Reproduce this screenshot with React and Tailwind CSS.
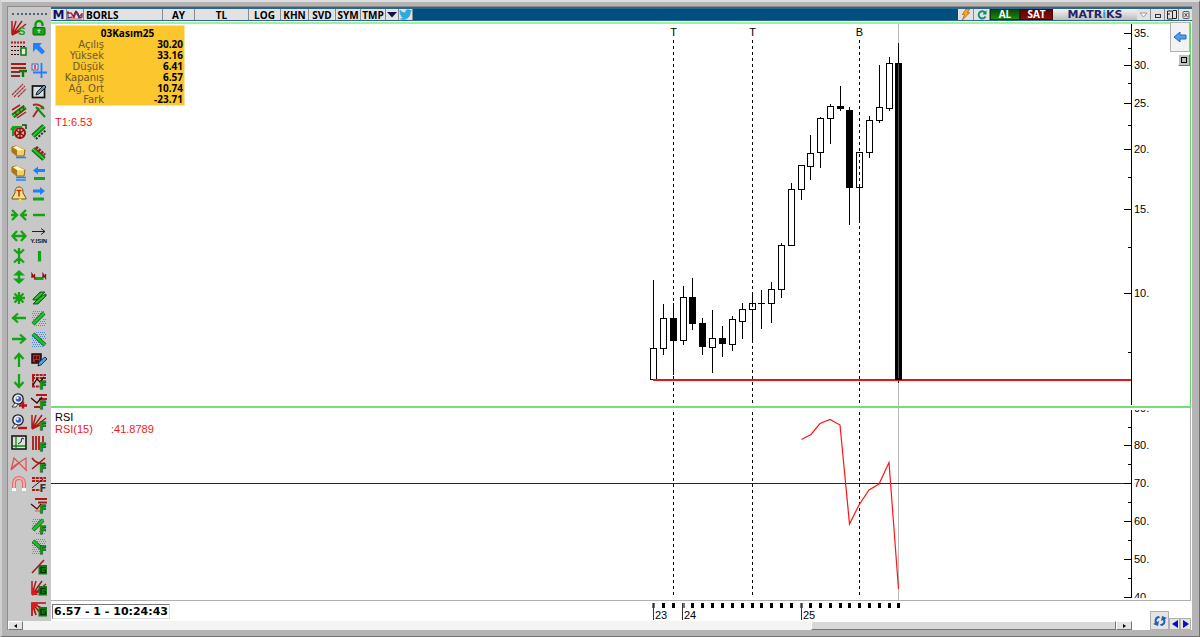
import React from "react";

const GREEN = "#12a412";
const DARK = "#0a5a0a";
const RED = "#b01818";
const BLUE = "#1f7fff";

/* ---------- icon pieces ---------- */

const Letter = ({ c }) => (
  <text x="8.5" y="15.5" fontSize="10" fontWeight="bold" fontFamily="DejaVu Sans, sans-serif" fill="#0c9c0c" stroke="#063c06" strokeWidth=".8" paintOrder="stroke">{c}</text>
);
const BoxG = () => (
  <g>
    <rect x="7.500" y="6" width="8.500" height="9.500" fill="#0f7a14" />
    <path d="M14.500 8.500h-4.500v5h4.500v-2.500h-2" fill="none" stroke="#052805" strokeWidth="1.200" />
  </g>
);
const Hatch = ({ d }) => (
  <path d={d} fill="none" stroke="#4a8ae6" strokeWidth="1" strokeDasharray="1 1" shapeRendering="crispEdges" />
);
const HATCH_UP = "M2 1.500h12M1 3.500h10M2 5.500h8M1 7.500h6M2 9.500h3M12 9.500h3M9 11.500h6M8 13.500h7M5 15.500h9";
const HATCH_DOWN = "M5 1.500h10M6 3.500h9M7 5.500h8M10 7.500h5M1 5.500h2M1 7.500h4M2 9.500h5M1 11.500h8M2 13.500h9M1 15.500h11";
const Slab = ({ d }) => (
  <g fill="none">
    <path d={d} stroke={DARK} strokeWidth="5" />
    <path d={d} stroke="#14a414" strokeWidth="3.200" />
    <path d={d} stroke="#4fd84f" strokeWidth="1" />
  </g>
);
const Bar = ({ d }) => (
  <g fill="none">
    <path d={d} stroke={DARK} strokeWidth="4" />
    <path d={d} stroke="#22bc32" strokeWidth="2.800" />
  </g>
);
const Arrows = ({ d }) => <path d={d} fill="none" stroke={GREEN} strokeWidth="2.300" />;
const Gold = ({ two }) => (
  <g>
    <path d="M1 2l4-1 9 4-1 6H6L1 7z" fill="#f6cf5f" stroke="#8a6414" />
    <path d="M1 2l5 3v6L1 7z" fill="#a87818" />
    <path d="M2 2l4-1 8 4-7 .5z" fill="#fff3c0" />
    <path d="M5 12.500h10" stroke={BLUE} strokeWidth="1.600" />
    {two && <path d="M5 15h10" stroke={BLUE} strokeWidth="1.400" />}
  </g>
);
const Lens = ({ plus }) => (
  <g>
    <circle cx="7" cy="6" r="5.200" fill="#e4ecff" stroke="#1b1b1b" strokeWidth="1.300" />
    <circle cx="7.500" cy="6" r="2.800" fill="#3a5ac0" />
    <circle cx="6.500" cy="5" r="1.200" fill="#fff" />
    <path d="M4 10l-3 4h4l2-3z" fill="#eee" stroke="#222" strokeWidth=".8" />
    <path d={plus ? "M8 12.500h8M12 8.500v7" : "M7 14h9"} stroke="#c01010" strokeWidth="2.400" />
  </g>
);
const Fan = () => <path d="M1 1v13M1 15L5 1M1 15L11 1M1 15L15 4M1 15L9 11" stroke={RED} strokeWidth="1.500" fill="none" />;

const LEFT = [
  ["Fan", <g><Fan /><text x="7" y="15" fontSize="11" fontWeight="bold" fontFamily="Liberation Sans, sans-serif" fill={GREEN}>S</text></g>],
  ["Levels", <g><path d="M0 1.500h15" stroke={RED} strokeWidth="2" strokeDasharray="2 1" /><path d="M0 5.500h15M0 9.500h10M0 13.500h9" stroke="#400" strokeDasharray="2 1" /><rect x="10" y="7" width="5" height="7" fill="#dff0df" stroke="#0a7a0a" strokeWidth="1.500" /></g>],
  ["Level text", <g><path d="M0 2h15M0 6h15" stroke={RED} strokeWidth="2" /><path d="M0 10h9M0 14h9" stroke="#600" strokeWidth="1.300" /><path d="M8 9h8M12 9v6" stroke="#0a7a0a" strokeWidth="2.400" /></g>],
  ["Parallel lines", <path d="M1 12L12 1M3 14L14 3M7 14L15 6" stroke="#9b3030" strokeWidth="1.200" strokeDasharray="3 .5" />],
  ["Channel", <g><Slab d="M2 13L14 4" /><path d="M1 7L9 2M6 15L15 9M4 9l2 4M8 6l2 4M12 3l1 4" stroke={RED} strokeWidth="1.500" /></g>],
  ["Target", <g><circle cx="9" cy="9" r="5" fill="#f3b0a0" stroke="#a01010" strokeWidth="2" /><path d="M5 6l8 6M13 6l-8 6M9 4v11" stroke="#7a0c0c" strokeWidth="1.300" /><path d="M2 12V4M0 6l2-3 3 3M3 3h8" stroke={GREEN} strokeWidth="2" fill="none" /><path d="M11 1h4v4" stroke="#0a4a0a" strokeWidth="1.500" fill="none" /></g>],
  ["Gold line", <Gold />],
  ["Gold lines", <Gold two />],
  ["Alarm", <g><path d="M8 1c-4 0-4 4-4 6l-3 5v1h14v-1l-3-5c0-2 0-6-4-6z" fill="#f4e08a" stroke="#6b5410" /><circle cx="9" cy="14" r="1.500" fill="#fbe02c" /><path d="M5.500 4.500h5M8 4.500v6" stroke="#d02a10" strokeWidth="1.500" /></g>],
  ["Compress horizontally", <Arrows d="M0 8h6M16 8h-6M1 3l5 5-5 5M15 3l-5 5 5 5" />],
  ["Expand horizontally", <Arrows d="M2 8h12M6 3L1.500 8 6 13M10 3l4.500 5-4.500 5" />],
  ["Compress vertically", <Arrows d="M8 0v16M3 1.500l5 4.500 5-4.500M3 14.500l5-4.500 5 4.500" />],
  ["Expand vertically", <g><path d="M8 1l6 5.500H2zM8 15l6-5.500H2z" fill={GREEN} /><path d="M8 4v8" stroke={GREEN} strokeWidth="2.400" /></g>],
  ["Fit", <Arrows d="M8 2v12M2 8h12M3.500 3.500l9 9M12.500 3.500l-9 9" />],
  ["Left", <Arrows d="M2 8h13M7 3.500L2 8l5 4.500" />],
  ["Right", <Arrows d="M1 8h13M9 3.500L14 8l-5 4.500" />],
  ["Up", <Arrows d="M8 15V2.500M3.500 7L8 2l4.500 5" />],
  ["Down", <Arrows d="M8 1v12.500M3.500 9L8 14l4.500-5" />],
  ["Zoom in", <Lens plus />],
  ["Zoom out", <Lens />],
  ["Chart box", <g><rect x="1" y="1" width="14" height="13" fill="#d8e4d8" stroke="#181818" strokeWidth="1.600" /><path d="M5 2v11M2 11h12" stroke="#0c8c0c" strokeWidth="1.300" /><path d="M7 9l3-2 1-4 2 1" stroke="#222" fill="none" /></g>],
  ["Pattern", <path d="M0 14L3 2l12 12V2L3 10l-3 4 8-7 8 8" fill="none" stroke="#e05050" strokeWidth="1.200" />],
  ["Magnet", <g fill="none"><path d="M3 12V7a5 5 0 0110 0v5" stroke="#e86a6a" strokeWidth="4" /><path d="M3 12V7a5 5 0 0110 0v5" stroke="#f2b4b4" strokeWidth="1.800" /><path d="M1 13.500h4M11 13.500h4" stroke="#fff" strokeWidth="3" /></g>],
];

const RIGHT = [
  ["Unlock", <g><path d="M4.500 8V4.500a3.500 3.500 0 017 0V6" fill="none" stroke="#149a14" strokeWidth="2.400" /><rect x="2" y="7.500" width="12" height="7.500" rx="1" fill="#18a018" stroke="#0a6a0a" /><path d="M8 13v-3M6.500 11L8 9.500 9.500 11" stroke="#d8ffd8" fill="none" /></g>],
  ["Pointer", <path d="M2 2h9L8.500 4.500 14 10.500 11 13.500 5 7.800 2 11z" fill={BLUE} />],
  ["Crosshair", <g><path d="M10.500 1v15M2 10.500h14" stroke={BLUE} strokeWidth="1.800" /><rect x="1" y="2" width="6" height="6" fill="#e9d8e0" stroke="#3a68c8" /><path d="M4 3v4" stroke="#c02020" strokeWidth="1.400" /></g>],
  ["Edit", <g><rect x="1.500" y="3" width="12" height="11.500" fill="#dcdcdc" stroke="#101010" strokeWidth="1.700" /><path d="M5 12l1-3 7-7 2 2-7 7z" fill="#4a9ad8" stroke="#111" strokeWidth=".9" /></g>],
  ["Tools", <g fill="none" strokeWidth="2"><path d="M2 2q6-2 11 4M8 5L2 14" stroke="#b02828" /><path d="M5 4l9 10M12 3l-2 3" stroke="#158a15" /></g>],
  ["Channel up", <g><Slab d="M2 12L13 2" /><path d="M5 15L15 6" stroke="#103810" strokeWidth="2" strokeDasharray="2 1.500" /></g>],
  ["Channel down", <g><Slab d="M2 4l11 10" /><path d="M5 2l9 8" stroke="#a01818" strokeWidth="3" strokeDasharray="2.500 1" /></g>],
  ["Line left", <g><path d="M2 5.500L7 1.500V4h7v3H7v2.500z" fill={BLUE} /><path d="M3 13.500h11" stroke={GREEN} strokeWidth="3" /></g>],
  ["Line right", <g><path d="M14 5L9 1v2.500H2v3h7V9z" fill={BLUE} /><path d="M2 13h11" stroke={GREEN} strokeWidth="3" /></g>],
  ["Horizontal line", <path d="M2 8h12" stroke={GREEN} strokeWidth="2.500" />],
  ["Yield", <g><path d="M1 3.500h13M10 .5l4 3-4 3" fill="none" stroke="#222" /><text x="-.5" y="15" fontSize="6" fontWeight="bold" fontFamily="Liberation Sans, sans-serif" fill="#111">Y.ISIN</text></g>],
  ["Vertical line", <path d="M8.500 3v10.500" stroke={GREEN} strokeWidth="3.200" />],
  ["Range", <g fill="none"><path d="M3.500 9.500h9" stroke={GREEN} strokeWidth="3" /><path d="M1 9V5l2.500 4V5M12 9V5l2.500 4V5" stroke="#8a1010" strokeWidth="1.300" /></g>],
  ["Band", <g><path d="M2 9L9 2h5L6 10H2zM2 14h5l8-8V4L9 7z" fill="#18a418" stroke={DARK} strokeWidth=".9" /><path d="M4 9L11 3M5 13L13 6" stroke="#4fd84f" strokeWidth=".9" /></g>],
  ["Area up", <g><Hatch d={HATCH_UP} /><Bar d="M2 14L13 3" /></g>],
  ["Area down", <g><Hatch d={HATCH_DOWN} /><Bar d="M2 3l12 11" /></g>],
  ["Annotate", <g><path d="M1 2h9v9H1z" fill="#b82828" stroke="#220606" strokeWidth="1.500" /><path d="M4 4v3M7 4v3M4 9h4" stroke="#200" strokeWidth="1.400" /><path d="M7 14l1-4 6-5 2 2-6 6z" fill="#49a3e8" stroke="#102030" strokeWidth=".9" /></g>],
  ["Fibonacci grid", <g><path d="M1 2h14M1 5h14M1 13.500h8M2 2v12" stroke={RED} strokeWidth="2" strokeDasharray="3 .8" /><path d="M2 12l4-6 3 3 4-5" stroke="#300" fill="none" strokeWidth="1.300" /><Letter c="F" /></g>],
  ["Fibonacci levels", <g><path d="M5 2h11M8 6h8M3 14h6" stroke={RED} strokeWidth="1.800" /><path d="M0 5l6 5 5-6" stroke="#400" fill="none" strokeWidth="1.300" /><Letter c="F" /></g>],
  ["Fibonacci fan", <g><Fan /><Letter c="F" /></g>],
  ["Fibonacci time", <g><path d="M2 1v14M5 1v14M8 1v14M12 1v6" stroke={RED} strokeWidth="1.800" /><Letter c="F" /></g>],
  ["Fibonacci arcs", <g><path d="M1 13L14 2M1 2q5 7 13 5" fill="none" stroke="#a01818" strokeWidth="1.600" /><Letter c="F" /></g>],
  ["Fibonacci zones", <g><path d="M1 2h14M1 5h14M1 14h8" stroke={RED} strokeWidth="1.800" strokeDasharray="3 .8" /><path d="M1 12L12 3" stroke="#222" /><text x="8.500" y="15.500" fontSize="10" fontWeight="bold" fontFamily="DejaVu Sans, sans-serif" fill="#333">F</text></g>],
  ["Fibonacci extension", <g><path d="M4 2h12M7 5.500h9" stroke={RED} strokeWidth="1.800" /><path d="M4 14h5" stroke="#f08080" strokeWidth="2" /><path d="M0 7l6 5 4-5" stroke="#400" fill="none" strokeWidth="1.200" /><Letter c="F" /></g>],
  ["Fibonacci area up", <g><Hatch d={HATCH_UP} /><Bar d="M2 12L12 2" /><Letter c="F" /></g>],
  ["Fibonacci area down", <g><Hatch d={HATCH_DOWN} /><Bar d="M2 3l9 8" /><Letter c="F" /></g>],
  ["Gann line", <g><path d="M1 14L13 1" stroke="#a01818" strokeWidth="1.500" /><BoxG /></g>],
  ["Gann fan", <g><Fan /><path d="M1 8v7h6z" fill="#e01818" /><BoxG /></g>],
  ["Gann fan down", <g><path d="M1 15V2h14M1 2l4 12M1 2l9 11M1 2l13 7" stroke="#b01010" strokeWidth="1.700" fill="none" /><path d="M1 2h7L1 9z" fill="#e01818" /><BoxG /></g>],
];

const Icon = ({ children }) => (
  <svg viewBox="0 0 16 16" className="block size-4 overflow-visible">{children}</svg>
);

const IconColumn = ({ items }) => (
  <div className="grid w-5 auto-rows-fr" style={{ height: `${(items.length / RIGHT.length) * 100}%` }}>
    {items.map(([name, art]) => (
      <button key={name} aria-label={name} className="grid min-h-0 place-items-center">
        <Icon>{art}</Icon>
      </button>
    ))}
  </div>
);

/* ---------- chart data: x, high, low, top, bottom, filled ---------- */

const CANDLES = [
  [653, 280, 379, 348, 379], [663, 304, 355, 318, 348], [673, 303, 375, 318, 340, 1],
  [683, 286, 345, 297, 340], [692, 278, 330, 297, 323, 1], [702, 318, 355, 323, 346, 1],
  [712, 310, 373, 338, 347], [722, 326, 357, 338, 343, 1], [732, 316, 351, 319, 344],
  [742, 303, 339, 309, 321], [752, 293, 341, 303, 309], [761, 290, 329, 303, 303],
  [771, 282, 323, 289, 303], [781, 243, 298, 245, 289], [791, 183, 246, 189, 245],
  [801, 165, 200, 165, 189], [810, 135, 180, 153, 166], [820, 117, 168, 118, 152],
  [830, 104, 144, 106, 118], [840, 86, 111, 106, 108, 1], [849, 107, 225, 110, 187, 1],
  [859, 152, 223, 152, 187], [869, 116, 158, 120, 152], [879, 65, 123, 107, 120],
  [889, 57, 111, 63, 108], [898, 43, 383, 63, 379, 1],
];
const MARKERS = [["T", 673], ["T", 752], ["B", 859]];
const PRICE = [["35.", 33], ["30.", 65], ["25.", 103], ["20.", 149], ["15.", 209], ["10.", 293]];
const PRICE_MINOR = [48, 83, 125, 177, 247, 352];
const RSI = [["90.", 408], ["80.", 445], ["70.", 483], ["60.", 521], ["50.", 559], ["40.", 597]];
const RSI_MINOR = [427, 464, 502, 540, 578];
const YEARS = [["23", 653], ["24", 682], ["25", 801]];

const left = (x) => ({ left: `${((x - 51) / 1081) * 100}%` });

const Plot = ({ y, h, children }) => (
  <svg viewBox={`51 ${y} 1081 ${h}`} preserveAspectRatio="none" className="absolute inset-0 h-full w-full">{children}</svg>
);

const Ticks = ({ major, minor, from, to }) => (
  <g stroke="#000" shapeRendering="crispEdges">
    <path d={`M1131.5 ${from}V${to}`} />
    {major.map(([t, y]) => <path key={t} d={`M1124 ${y + 0.5}h7`} />)}
    {minor.map((y) => <path key={y} d={`M1128 ${y + 0.5}h3`} />)}
  </g>
);

const Scale = ({ values, y, h }) => (
  <div className="relative my-0.5 w-[58px] shrink-0 overflow-hidden">
    {values.map(([t, v]) => (
      <span key={t} className="absolute left-0.5 -translate-y-1/2 leading-3" style={{ top: `${((v - y) / h) * 100}%` }}>{t}</span>
    ))}
  </div>
);

const Dashes = ({ from, to }) => (
  <g stroke="#000" strokeDasharray="3 3" shapeRendering="crispEdges">
    {MARKERS.map(([, x]) => <path key={x} d={`M${x + 0.5} ${from}V${to}`} />)}
  </g>
);

/* ---------- header ---------- */

const TAB = "flex shrink-0 items-center justify-center border-r border-[#8a8a8a] bg-[#e2e2e2] leading-3 ";

const Header = () => (
  <header className="flex h-3.5 shrink-0 border-t-2 border-b border-[#2a678c] bg-[#00507f] font-['Open_Sans',sans-serif] text-[10px] font-bold text-black">
    <span className={TAB + "w-4 font-['DejaVu_Sans',sans-serif] text-xs text-[#10106a]"}>M</span>
    <button aria-label="Chart type" className={TAB + "w-[17px]"}>
      <svg viewBox="0 0 16 10" className="h-2.5 w-4">
        <path d="M0 3h4l3 4 2-5 3 5 3-3" fill="none" stroke="#d02020" strokeWidth="1.700" />
        <path d="M1 1v7l4-1M6 8q2-8 4-6t2 6l3-1V3" fill="none" stroke="#25308a" strokeWidth="1.100" />
        <path d="M0 9h15" stroke="#d05050" />
      </svg>
    </button>
    <input aria-label="Symbol" defaultValue="BORLS" className="w-[79px] border-r border-[#8a8a8a] bg-[#e2e2e2] px-0.5 leading-3 outline-none" />
    <button className={TAB + "w-8"}>AY</button>
    <button className={TAB + "w-[54px]"}>TL</button>
    <button className={TAB + "w-8"}>LOG</button>
    <button className={TAB + "w-7"}>KHN</button>
    <button className={TAB + "w-[27px]"}>SVD</button>
    <button className={TAB + "w-[25px]"}>SYM</button>
    <button className={TAB + "w-[25px]"}>TMP</button>
    <button aria-label="More" className={TAB + "w-[13px]"}>
      <svg viewBox="0 0 10 6" className="h-1.5 w-2.5"><path d="M0 0h10L5 5.500z" fill="#10104a" /></svg>
    </button>
    <button aria-label="Twitter" className={TAB + "w-3.5"}>
      <svg viewBox="0 0 24 20" className="h-[11px] w-[13px]"><path d="M23.950 2.600a10 10 0 01-2.800.8 5 5 0 002.200-2.700c-1 .6-2 1-3.100 1.200a4.900 4.900 0 00-8.400 4.500A14 14 0 011.700 1.200a4.900 4.900 0 001.500 6.600c-.8 0-1.600-.2-2.200-.6v.1a5 5 0 004 4.800 5 5 0 01-2.200.1 4.900 4.900 0 004.600 3.400A9.900 9.900 0 010 17.600 14 14 0 007.500 19.800c9 0 14-7.500 14-14v-.6a10 10 0 002.450-2.600z" fill="#2fa9e0" /></svg>
    </button>
    <div className="flex-1" />
    <button aria-label="Quick order" className={TAB + "w-4"}>
      <svg viewBox="0 0 10 12" className="h-[11px] w-2.5"><path d="M5 0h4L6.500 4H9L1 12l2.500-6H1z" fill="#ffa51e" stroke="#b05a10" strokeWidth=".8" /></svg>
    </button>
    <button aria-label="Refresh" className={TAB + "w-4"}>
      <svg viewBox="0 0 10 10" className="size-2.5"><path d="M8 2.500A3.600 3.600 0 108.500 6.500" fill="none" stroke="#158a70" strokeWidth="1.900" /><path d="M9.500 0v4.500H5.500z" fill="#158a70" /></svg>
    </button>
    <button className="w-[30px] shrink-0 border border-[#0a3a0a] bg-gradient-to-b from-[#0a4a0a] to-[#1d8a0c] leading-[9px] text-white">AL</button>
    <button className="w-[33px] shrink-0 border border-[#4a0606] bg-gradient-to-b from-[#5a0606] to-[#8a0c0c] leading-[9px] text-white">SAT</button>
    <div className="flex w-[84px] shrink-0 items-center justify-center bg-gradient-to-b from-[#f4f4f4] to-[#bcbcbc] font-['DejaVu_Sans',sans-serif] text-[11px] leading-3 text-[#24246a]">
      MATR<span className="text-[#20a0d8]">i</span>KS
    </div>
    <button aria-label="Menu" className={TAB + "w-3.5"}><svg viewBox="0 0 9 6" className="h-1.5 w-[9px]"><path d="M1 1h7L4.500 5z" fill="#fff" stroke="#999" /></svg></button>
    <button aria-label="Minimize" className={TAB + "w-3.5"}><span className="mt-0.5 h-1 w-1.5 border border-[#333]" /></button>
    <button aria-label="Restore" className={TAB + "w-3.5"}><svg viewBox="0 0 10 10" className="size-2.5"><path d="M.5 1h5v8h-5zM6 .5h3.500v8H6M2 3v2" fill="none" stroke="#222" /></svg></button>
    <button aria-label="Close" className="grid w-[13px] shrink-0 place-items-center bg-[#e2e2e2]"><svg viewBox="0 0 8 8" className="size-2"><rect x="1" y=".5" width="6" height="7" rx="1" fill="none" stroke="#555" /><path d="M2.500 2l3 4M5.500 2l-3 4" stroke="#555" /></svg></button>
  </header>
);

const QUOTE = [["Açılış", "30.20"], ["Yüksek", "33.16"], ["Düşük", "6.41"], ["Kapanış", "6.57"], ["Ağ. Ort", "10.74"], ["Fark", "-23.71"]];

const QuoteBox = () => (
  <div className="w-[130px] border border-[#fbe3a0] bg-[#fcc62d] pt-px pr-px">
    <table className="w-full text-[10px] leading-[11px]">
      <caption className="pl-4 text-center font-['Open_Sans',sans-serif] leading-3 font-bold">03Kasım25</caption>
      <tbody>
        {QUOTE.map(([k, v]) => (
          <tr key={k}>
            <th scope="row" className="w-12 p-0 text-right font-['DejaVu_Sans',sans-serif] font-normal whitespace-nowrap text-[#6b5a28]">{k}</th>
            <td className="p-0 text-right font-['Open_Sans',sans-serif] font-bold">{v}</td>
          </tr>
        ))}
      </tbody>
    </table>
  </div>
);

const RAISED = "border border-t-white border-l-white border-r-[#777] border-b-[#777] ";

export default function App() {
  return (
    <div className="flex h-screen flex-col border-t-2 border-r border-b border-l-2 border-t-[#dedede] border-r-[#707070] border-b-[#707070] border-l-[#cfcfcf] bg-[#b4b4b4] pt-1 pr-[7px] pb-1.5 pl-[5px] font-['Liberation_Sans',sans-serif] text-[11px] text-black">
      <div className="flex min-h-0 flex-1 flex-col border-t border-l border-[#8c8c8c] bg-white">
        <div className="flex min-h-0 flex-1">
          <nav aria-label="Drawing tools" className="flex w-[43px] shrink-0 flex-col bg-[#c8c8c8] pt-1.5 pb-0.5">
            <div className="mx-1 mb-[3px] h-0.5 shrink-0 border-t-2 border-dotted border-[#4a6678]" />
            <div className="flex min-h-0 flex-1 pl-px">
              <IconColumn items={LEFT} />
              <IconColumn items={RIGHT} />
            </div>
          </nav>

          <main className="flex min-w-0 flex-1 flex-col">
            <Header />
            <section aria-label="Price" className="relative mt-px mr-px flex min-h-0 flex-[382] border-t-2 border-r border-b-2 border-t-[#9df09d] border-r-[#5fd85f] border-b-[#74e074]">
              <div className="relative min-w-0 flex-1">
                <Plot y={24} h={382}>
                  <path d="M898.5 24V406" stroke="#bdbdbd" shapeRendering="crispEdges" />
                  {CANDLES.map(([x, hi, lo, top, bottom, filled]) => (
                    <g key={x} shapeRendering="crispEdges" stroke="#000">
                      <path d={`M${x + 0.5} ${hi}V${lo}`} />
                      {top === bottom
                        ? <path d={`M${x - 3} ${top + 0.5}h7`} />
                        : <rect x={x - 2.5} y={top + 0.5} width="6" height={bottom - top} fill={filled ? "#000" : "#fff"} />}
                    </g>
                  ))}
                  <path d="M898.5 64V379" stroke="#8a8a8a" strokeWidth=".6" />
                  <Dashes from={40} to={406} />
                  <path d="M653 380H1132" stroke="#e01818" strokeWidth="2" shapeRendering="crispEdges" />
                  <path d="M895 378h7v2h-7z" />
                  <Ticks major={PRICE} minor={PRICE_MINOR} from={24} to={405} />
                </Plot>
                {MARKERS.map(([t, x]) => (
                  <span key={x} className="absolute top-0.5 -translate-x-1/2 leading-3" style={left(x + 0.5)}>{t}</span>
                ))}
                <div className="absolute top-px left-1 flex flex-col gap-2.5">
                  <QuoteBox />
                  <span className="leading-3 text-[#f01818]">T1:6.53</span>
                </div>
              </div>
              <Scale values={PRICE} y={26} h={378} />
              <div className="absolute -top-0.5 right-0 flex flex-col items-end gap-0.5">
                <button aria-label="Collapse" className="grid h-[30px] w-5 place-items-center border border-[#b0b0b0] bg-[#f2f2f2]">
                  <svg viewBox="0 0 14 12" className="h-3 w-3.5"><path d="M1 6l6-5v3h6v4H7v3z" fill="#4f9df0" stroke="#2a68b8" /></svg>
                </button>
                <button aria-label="Maximize panel" className={RAISED + "grid h-3 w-3 place-items-center bg-[#c0c0c0]"}>
                  <span className="h-1.5 w-1.5 border border-black" />
                </button>
              </div>
            </section>

            <section aria-label="RSI" className="mr-px flex min-h-0 flex-[192] border-r border-b border-[#b0b0b0]">
              <div className="relative min-w-0 flex-1">
                <Plot y={408} h={192}>
                  <path d="M898.5 408V600" stroke="#bdbdbd" shapeRendering="crispEdges" />
                  <path d="M51 483.500H1132" stroke="#6a0c0c" shapeRendering="crispEdges" />
                  <Dashes from={412} to={597} />
                  <path d="M801.5 439.500L811 434.500 820 423.500 830 419.500 840 425 849.500 524 859 505 869 490 879 484 889 462.500 898.500 589" fill="none" stroke="#ff1414" strokeWidth="1.200" />
                  <Ticks major={RSI.slice(1)} minor={RSI_MINOR} from={410} to={598} />
                </Plot>
                <div className="absolute top-[3px] left-1 leading-3">
                  <div>RSI</div>
                  <div className="flex text-[#f01818]"><span className="w-14">RSI(15)</span><span>:41.8789</span></div>
                </div>
              </div>
              <Scale values={RSI} y={410} h={188} />
            </section>

            <div className="flex h-5 shrink-0">
              <div className="relative min-w-0 flex-1">
                <Plot y={601} h={20}>
                  {CANDLES.map(([x], i) => <path key={x} d={`M${x - 1} 603h3v5h-3z`} fill={[0, 3, 15].includes(i) ? "#777" : "#000"} shapeRendering="crispEdges" />)}
                  {YEARS.map(([t, x]) => <path key={t} d={`M${x + 0.5} 603V620`} stroke="#333" shapeRendering="crispEdges" />)}
                </Plot>
                <output className="absolute top-[3px] left-px border border-t-[#777] border-l-[#777] border-r-[#ddd] border-b-[#ddd] bg-white px-px font-['DejaVu_Sans',sans-serif] leading-[13px] font-bold whitespace-nowrap">6.57 - 1 - 10:24:43</output>
                {YEARS.map(([t, x]) => (
                  <span key={t} className="absolute top-2 pl-0.5 leading-3" style={left(x)}>{t}</span>
                ))}
              </div>
              <div className="w-[60px] shrink-0" />
            </div>
          </main>
        </div>

        <footer className="flex h-[9px] shrink-0 items-end">
          <div className="flex h-[9px] min-w-0 flex-1 bg-[#f4f4f4]">
            <button aria-label="Scroll left" className={RAISED + "grid w-[15px] place-items-center bg-[#e4e4e4]"}><svg viewBox="0 0 3 4" className="h-1 w-[3px]"><path d="M3 0v4L0 2z" /></svg></button>
            <div className="flex-[789]" />
            <div className={RAISED + "flex-[303] bg-[#d8d8d8]"} />
            <button aria-label="Scroll right" className={RAISED + "grid w-4 place-items-center bg-[#e4e4e4]"}><svg viewBox="0 0 3 4" className="h-1 w-[3px]"><path d="M0 0v4l3-2z" /></svg></button>
          </div>
          <div className="flex w-[60px] shrink-0 items-end justify-end pr-px">
            <button aria-label="Reload" className="grid h-[19px] w-[19px] place-items-center border border-[#b0b0b0] bg-[#e4e4e4]">
              <svg viewBox="0 0 14 14" className="size-3.5"><path d="M6 2C2 2 1 6 2 9l-2 1 5 2 1-5-2 1c-1-2 0-4 3-4zM8 12c4 0 5-4 4-7l2-1-5-2-1 5 2-1c1 2 0 4-3 4z" fill="#1f5fb4" /></svg>
            </button>
            <button aria-label="Previous" className="grid h-3 w-[11px] place-items-center border border-[#b0b0b0] bg-[#e4e4e4]"><svg viewBox="0 0 6 8" className="h-2 w-1.5"><path d="M6 0v8L0 4z" fill="#0a0ad0" /></svg></button>
            <button aria-label="Next" className="grid h-3 w-[11px] place-items-center border border-[#b0b0b0] bg-[#e4e4e4]"><svg viewBox="0 0 6 8" className="h-2 w-1.5"><path d="M0 0v8l6-4z" fill="#0a0ad0" /></svg></button>
          </div>
        </footer>
      </div>
    </div>
  );
}
